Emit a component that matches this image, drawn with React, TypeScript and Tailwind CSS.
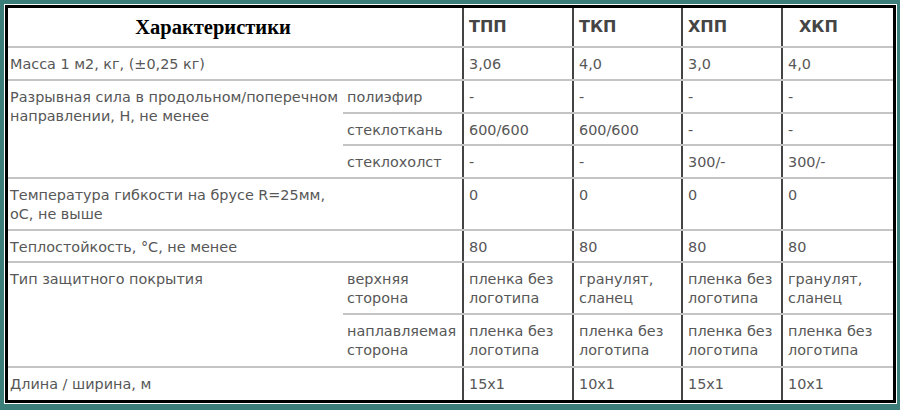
const font = "font-['DejaVu_Sans','Liberation_Sans',sans-serif]";

const base = "align-top border-b-2 border-[#c4c4c4] pt-[7px] text-[#575757] leading-[19px] whitespace-nowrap overflow-visible";
const td = base + " pl-[2px] pr-0";
const sub = base + " pl-[4px] pr-0";
const val = base + " border-l-2 border-l-[#444] pl-[5px]";
const last = (c: string) => c.replace("border-b-2 border-[#c4c4c4] ", "");

export default function App() {
  return (
    <div className="w-[900px] h-[410px] bg-[#3c7e7a] pl-[4px] pt-[4px] pr-[3px] pb-[6px]">
      <div className="h-full bg-white p-[1px]">
        <div className={"h-full border-[3px] border-black bg-white text-[14.4px] " + font}>
          <table className="w-full table-fixed border-collapse">
            <colgroup>
              <col className="w-[335px]" />
              <col className="w-[120px]" />
              <col className="w-[110px]" />
              <col className="w-[109px]" />
              <col className="w-[100px]" />
              <col />
            </colgroup>
            <tbody>
              <tr className="h-[39px]">
                <td colSpan={2} className="border-b-2 border-[#c4c4c4] text-center align-middle pr-[44px]">
                  <span className="font-['Liberation_Serif',serif] font-bold text-[20.5px] text-black">Характеристики</span>
                </td>
                {["ТПП", "ТКП", "ХПП", "ХКП"].map((h, i) => (
                  <td key={h} className={"border-b-2 border-[#c4c4c4] border-l-2 border-l-[#444] align-middle font-bold text-[#454545] text-[16px] " + (i === 3 ? "pl-[16px]" : "pl-[5px]")}>
                    {h}
                  </td>
                ))}
              </tr>
              <tr className="h-[33px]">
                <td colSpan={2} className={td}>Масса 1 м2, кг, (±0,25 кг)</td>
                <td className={val}>3,06</td>
                <td className={val}>4,0</td>
                <td className={val}>3,0</td>
                <td className={val}>4,0</td>
              </tr>
              <tr className="h-[33px]">
                <td rowSpan={3} className={td}>
                  Разрывная сила в продольном/поперечном
                  <br />
                  направлении, Н, не менее
                </td>
                <td className={sub}>полиэфир</td>
                <td className={val}>-</td>
                <td className={val}>-</td>
                <td className={val}>-</td>
                <td className={val}>-</td>
              </tr>
              <tr className="h-[32px]">
                <td className={sub}>стеклоткань</td>
                <td className={val}>600/600</td>
                <td className={val}>600/600</td>
                <td className={val}>-</td>
                <td className={val}>-</td>
              </tr>
              <tr className="h-[33px]">
                <td className={sub}>стеклохолст</td>
                <td className={val}>-</td>
                <td className={val}>-</td>
                <td className={val}>300/-</td>
                <td className={val}>300/-</td>
              </tr>
              <tr className="h-[52px]">
                <td colSpan={2} className={td}>
                  Температура гибкости на брусе R=25мм,
                  <br />
                  оС, не выше
                </td>
                <td className={val}>0</td>
                <td className={val}>0</td>
                <td className={val}>0</td>
                <td className={val}>0</td>
              </tr>
              <tr className="h-[32px]">
                <td colSpan={2} className={td}>Теплостойкость, °С, не менее</td>
                <td className={val}>80</td>
                <td className={val}>80</td>
                <td className={val}>80</td>
                <td className={val}>80</td>
              </tr>
              <tr className="h-[52px]">
                <td rowSpan={2} className={td}>Тип защитного покрытия</td>
                <td className={sub}>
                  верхняя
                  <br />
                  сторона
                </td>
                <td className={val}>пленка без<br />логотипа</td>
                <td className={val}>гранулят,<br />сланец</td>
                <td className={val}>пленка без<br />логотипа</td>
                <td className={val}>гранулят,<br />сланец</td>
              </tr>
              <tr className="h-[53px]">
                <td className={sub}>
                  наплавляемая
                  <br />
                  сторона
                </td>
                <td className={val}>пленка без<br />логотипа</td>
                <td className={val}>пленка без<br />логотипа</td>
                <td className={val}>пленка без<br />логотипа</td>
                <td className={val}>пленка без<br />логотипа</td>
              </tr>
              <tr className="h-[33px]">
                <td colSpan={2} className={last(td)}>Длина / ширина, м</td>
                <td className={last(val)}>15x1</td>
                <td className={last(val)}>10x1</td>
                <td className={last(val)}>15x1</td>
                <td className={last(val)}>10x1</td>
              </tr>
            </tbody>
          </table>
        </div>
      </div>
    </div>
  );
}
